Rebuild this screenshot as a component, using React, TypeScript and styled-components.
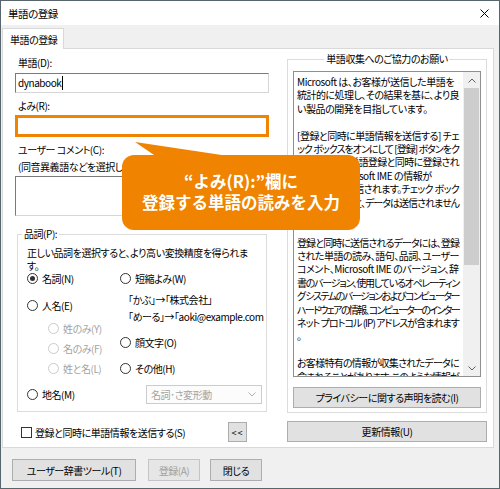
import React, { useLayoutEffect, useRef, useState } from 'react';
import styled, { createGlobalStyle } from 'styled-components';

const GlobalStyle = createGlobalStyle`
  html, body {
    margin: 0;
    padding: 0;
    background: #ffffff;
  }
  body {
    font-family: "Noto Sans CJK JP", "Noto Sans", sans-serif;
    font-size: 10px;
    color: #000000;
  }
  * {
    box-sizing: border-box;
  }
`;

const Window = styled.div`
  position: relative;
  width: 500px;
  height: 489px;
  border: 1px solid #57656d;
  background: #f0f0f0;
  display: flex;
  flex-direction: column;
  overflow: hidden;
  font-feature-settings: "palt";
  letter-spacing: -0.45px;
`;

const TitleBar = styled.div`
  flex: none;
  height: 24px;
  background: #ffffff;
  display: flex;
  align-items: center;
  justify-content: space-between;
  padding: 0 10px 0 7px;
  font-size: 10.5px;
`;

const Body = styled.div`
  padding: 3px 5px 0 1px;
`;

const TabStrip = styled.div`
  display: flex;
`;

const Tab = styled.div`
  position: relative;
  z-index: 1;
  height: 21px;
  margin-bottom: -1px;
  padding: 0 6px 0 7px;
  display: flex;
  align-items: center;
  background: #ffffff;
  border: 1px solid #d9d9d9;
  border-bottom: none;
`;

const TabPanel = styled.div`
  height: 400px;
  background: #ffffff;
  border: 1px solid #d9d9d9;
  display: grid;
  grid-template-columns: 254px 200px;
  column-gap: 18px;
  padding: 0 6px 0 12px;
`;

const Column = styled.div`
  display: flex;
  flex-direction: column;
`;

const FieldLabel = styled.div<{ $mt: number; $indent?: number }>`
  margin-top: ${p => p.$mt}px;
  padding-left: ${p => p.$indent ?? 3}px;
  height: 14px;
  line-height: 14px;
  white-space: nowrap;
  overflow: hidden;
`;

const TextInput = styled.div<{ $mt: number; $h: number; $highlight?: boolean }>`
  margin-top: ${p => p.$mt}px;
  height: ${p => p.$h}px;
  background: #ffffff;
  border-style: solid;
  border-width: ${p => (p.$highlight ? 3 : 1)}px;
  border-color: ${p => (p.$highlight ? '#f08300' : '#7a7a7a #d6d6d6 #d6d6d6 #7a7a7a')};
  padding: 1px 2px;
  display: flex;
  align-items: flex-start;
  line-height: 16px;
`;

const Caret = styled.span`
  display: inline-block;
  width: 1px;
  height: 14px;
  margin-top: 1px;
  margin-left: 1px;
  background: #000000;
`;

const GroupBox = styled.div<{ $mt: number; $mx: number }>`
  position: relative;
  margin: ${p => p.$mt}px ${p => p.$mx}px 0;
  border: 1px solid #dcdcdc;
`;

const Legend = styled.span<{ $center?: boolean }>`
  position: absolute;
  top: -8px;
  left: ${p => (p.$center ? '50%' : '4px')};
  transform: ${p => (p.$center ? 'translateX(-50%)' : 'none')};
  padding: 0 2px;
  background: #ffffff;
  line-height: 14px;
  white-space: nowrap;
`;

const PartsBody = styled.div`
  padding: 12px 8px 7px 9px;
`;

const Hint = styled.div`
  line-height: 12.5px;
  white-space: nowrap;
`;

const RadioGrid = styled.div`
  margin-top: -1px;
  display: grid;
  grid-template-columns: 93px 1fr;
`;

const RadioItem = styled.div<{ $mt?: number; $indent?: number; $disabled?: boolean }>`
  margin-top: ${p => p.$mt ?? 0}px;
  margin-left: ${p => p.$indent ?? 0}px;
  height: 14px;
  display: flex;
  align-items: center;
  gap: 4px;
  white-space: nowrap;
  color: ${p => (p.$disabled ? '#a3a3a3' : '#000000')};
`;

const RadioCircle = styled.span<{ $checked?: boolean; $disabled?: boolean }>`
  flex: none;
  width: 11px;
  height: 11px;
  border-radius: 50%;
  border: 1px solid ${p => (p.$disabled ? '#cbcbcb' : '#333333')};
  background: #ffffff;
  display: flex;
  align-items: center;
  justify-content: center;

  &::after {
    content: '';
    width: 5px;
    height: 5px;
    border-radius: 50%;
    background: ${p => (p.$checked ? '#333333' : 'transparent')};
  }
`;

const Example = styled.div<{ $mt: number }>`
  margin-top: ${p => p.$mt}px;
  margin-left: 8px;
  height: 14px;
  line-height: 14px;
  white-space: nowrap;
`;

const BottomRow = styled.div`
  margin-top: 10px;
  height: 19px;
  display: grid;
  grid-template-columns: 93px 1fr;
  align-items: center;
`;

const Select = styled.div`
  margin-left: 26px;
  width: 116px;
  height: 19px;
  border: 1px solid #cccccc;
  background: #fcfcfc;
  color: #a3a3a3;
  display: flex;
  align-items: center;
  justify-content: space-between;
  padding: 0 5px 0 4px;
`;

const CheckRow = styled.div`
  margin-top: 10px;
  height: 20px;
  display: flex;
  align-items: center;
  padding-left: 6px;
`;

const CheckBox = styled.span`
  flex: none;
  width: 11px;
  height: 11px;
  border: 1px solid #333333;
  background: #ffffff;
  margin-right: 3px;
`;

const Button = styled.div<{ $w?: number; $h: number; $mt?: number; $disabled?: boolean }>`
  flex: none;
  width: ${p => (p.$w ? `${p.$w}px` : 'auto')};
  height: ${p => p.$h}px;
  margin-top: ${p => p.$mt ?? 0}px;
  background: ${p => (p.$disabled ? '#e6e6e6' : '#e1e1e1')};
  border: 1px solid ${p => (p.$disabled ? '#c4c4c4' : '#adadad')};
  color: ${p => (p.$disabled ? '#a0a0a0' : '#000000')};
  display: flex;
  align-items: center;
  justify-content: center;
  white-space: nowrap;
`;

const SmallButton = styled(Button)`
  margin-left: auto;
  margin-right: 22px;
  font-size: 9px;
  letter-spacing: 1px;
`;

const NoticeBody = styled.div`
  padding: 11px 5px 4px 5px;
`;

const NoticeBox = styled.div`
  height: 306px;
  border: 1px solid #8e8f8f;
  background: #ffffff;
  display: flex;
`;

const NoticeText = styled.div`
  flex: 1;
  min-width: 0;
  overflow: hidden;
  padding: 3px 0 0 3px;
`;

const NoticeLine = styled.div`
  height: 13.4px;
  line-height: 13.4px;
  white-space: nowrap;
`;

const ScrollBar = styled.div`
  flex: none;
  width: 17px;
  background: #f0f0f0;
  display: flex;
  flex-direction: column;
`;

const ScrollArrow = styled.div`
  height: 16px;
  display: flex;
  align-items: center;
  justify-content: center;
`;

const ScrollThumb = styled.div`
  height: 177px;
  margin: 0 1px;
  background: #cdcdcd;
`;

const ScrollTrack = styled.div`
  flex: 1;
`;

const Footer = styled.div`
  display: flex;
  gap: 12px;
  padding: 11px 0 0 11px;

  & > :last-child {
    margin-left: -2px;
  }
`;

const Callout = styled.div`
  position: absolute;
  left: 121px;
  top: 154px;
  width: 238px;
  height: 75px;
  border-radius: 12px;
  background: #f08300;
  color: #ffffff;
  font-size: 16.5px;
  font-weight: 700;
  line-height: 21px;
  letter-spacing: 0;
  font-feature-settings: normal;
  display: flex;
  flex-direction: column;
  align-items: center;
  justify-content: center;
  padding-bottom: 2px;

  &::before {
    content: '';
    position: absolute;
    left: 13px;
    top: -13px;
    width: 100px;
    height: 15px;
    background: #f08300;
    clip-path: polygon(0 0, 22px 100%, 100px 100%);
  }
`;

const Chevron: React.FC<{ up?: boolean; color?: string }> = ({ up, color = '#606060' }) => (
  <svg width="8" height="5" viewBox="0 0 8 5">
    <polyline
      points={up ? '0.5,4.5 4,1 7.5,4.5' : '0.5,0.5 4,4 7.5,0.5'}
      fill="none"
      stroke={color}
      strokeWidth="1"
    />
  </svg>
);

const notice = [
  'Microsoft は、お客様が送信した単語を',
  '統計的に処理し、その結果を基に、より良',
  'い製品の開発を目指しています。',
  '',
  '[登録と同時に単語情報を送信する] チェ',
  'ック ボックスをオンにして [登録] ボタンをク',
  'リックすると、単語登録と同時に登録され',
  'た単語と Microsoft IME の情報が',
  'Microsoft に送信されます。チェック ボック',
  'スをオフにすると、データは送信されません',
  '。',
  '',
  '登録と同時に送信されるデータには、登録',
  'された単語の読み、語句、品詞、ユーザー',
  'コメント、Microsoft IME のバージョン、辞',
  '書のバージョン、使用しているオペレーティン',
  'グ システムのバージョンおよびコンピューター',
  'ハードウェアの情報、コンピューターのインター',
  'ネット プロトコル (IP) アドレスが含まれます',
  '。',
  '',
  'お客様特有の情報が収集されたデータに',
  '含まれることがあります。このような情報が',
  '含まれていた場合でも、Microsoft では',
];

// 行が枠に収まらないときだけ字間を詰める
const BASE_SPACING = -0.45;
const LINE_MAX = 162;

const FitLine: React.FC<{ text: string }> = ({ text }) => {
  const ref = useRef<HTMLSpanElement>(null);
  const [spacing, setSpacing] = useState<number | null>(null);

  useLayoutEffect(() => {
    const measure = () => {
      const el = ref.current;
      if (!el || !text) return;
      const current = parseFloat(getComputedStyle(el).letterSpacing) || 0;
      const width = el.getBoundingClientRect().width;
      const natural = width - (current - BASE_SPACING) * text.length;
      setSpacing(natural > LINE_MAX ? BASE_SPACING - (natural - LINE_MAX) / text.length : null);
    };
    measure();
    document.fonts?.ready.then(measure);
  }, [text]);

  return (
    <NoticeLine>
      <span ref={ref} style={spacing !== null ? { letterSpacing: `${spacing}px` } : undefined}>
        {text || '\u00a0'}
      </span>
    </NoticeLine>
  );
};

const App: React.FC = () => {
  return (
    <>
      <GlobalStyle />
      <Window>
        <TitleBar>
          <span>単語の登録</span>
          <svg width="9" height="9" viewBox="0 0 9 9">
            <path d="M0.5 0.5 L8.5 8.5 M8.5 0.5 L0.5 8.5" stroke="#000" strokeWidth="1" />
          </svg>
        </TitleBar>

        <Body>
          <TabStrip>
            <Tab>単語の登録</Tab>
          </TabStrip>
          <TabPanel>
            <Column>
              <FieldLabel $mt={7}>単語(D):</FieldLabel>
              <TextInput $mt={3} $h={20}>
                dynabook<Caret />
              </TextInput>
              <FieldLabel $mt={6}>よみ(R):</FieldLabel>
              <TextInput $mt={2} $h={22} $highlight />
              <FieldLabel $mt={6}>ユーザー コメント(C):</FieldLabel>
              <FieldLabel $mt={3} $indent={3}>
                (同音異義語などを選択しやすくするためのコメント)
              </FieldLabel>
              <TextInput $mt={2} $h={40} />

              <GroupBox $mt={18} $mx={2}>
                <Legend>品詞(P):</Legend>
                <PartsBody>
                  <Hint>
                    正しい品詞を選択すると、より高い変換精度を得られま
                    <br />
                    す。
                  </Hint>
                  <RadioGrid>
                    <Column>
                      <RadioItem>
                        <RadioCircle $checked />
                        名詞(N)
                      </RadioItem>
                      <RadioItem $mt={13}>
                        <RadioCircle />
                        人名(E)
                      </RadioItem>
                      <RadioItem $mt={9} $indent={21} $disabled>
                        <RadioCircle $disabled />
                        姓のみ(Y)
                      </RadioItem>
                      <RadioItem $mt={6} $indent={21} $disabled>
                        <RadioCircle $disabled />
                        名のみ(F)
                      </RadioItem>
                      <RadioItem $mt={6} $indent={21} $disabled>
                        <RadioCircle $disabled />
                        姓と名(L)
                      </RadioItem>
                    </Column>
                    <Column>
                      <RadioItem>
                        <RadioCircle />
                        短縮よみ(W)
                      </RadioItem>
                      <Example $mt={8}>「かぶ」→「株式会社」</Example>
                      <Example $mt={3}>「めーる」→「aoki@example.com</Example>
                      <RadioItem $mt={11}>
                        <RadioCircle />
                        顔文字(O)
                      </RadioItem>
                      <RadioItem $mt={12}>
                        <RadioCircle />
                        その他(H)
                      </RadioItem>
                    </Column>
                  </RadioGrid>
                  <BottomRow>
                    <RadioItem>
                      <RadioCircle />
                      地名(M)
                    </RadioItem>
                    <Select>
                      <span>名詞･さ変形動</span>
                      <Chevron color="#b0b0b0" />
                    </Select>
                  </BottomRow>
                </PartsBody>
              </GroupBox>

              <CheckRow>
                <CheckBox />
                登録と同時に単語情報を送信する(S)
                <SmallButton $w={19} $h={20}>
                  &lt;&lt;
                </SmallButton>
              </CheckRow>
            </Column>

            <Column>
              <GroupBox $mt={10} $mx={0}>
                <Legend $center>単語収集へのご協力のお願い</Legend>
                <NoticeBody>
                  <NoticeBox>
                    <NoticeText>
                      {notice.map((line, index) => (
                        <FitLine key={index} text={line} />
                      ))}
                    </NoticeText>
                    <ScrollBar>
                      <ScrollArrow>
                        <Chevron up />
                      </ScrollArrow>
                      <ScrollThumb />
                      <ScrollTrack />
                      <ScrollArrow>
                        <Chevron />
                      </ScrollArrow>
                    </ScrollBar>
                  </NoticeBox>
                  <Button $h={21} $mt={10}>
                    プライバシーに関する声明を読む(I)
                  </Button>
                </NoticeBody>
              </GroupBox>
              <Button $h={21} $mt={8}>
                更新情報(U)
              </Button>
            </Column>
          </TabPanel>
        </Body>

        <Footer>
          <Button $w={124} $h={22}>
            ユーザー辞書ツール(T)
          </Button>
          <Button $w={52} $h={22} $disabled>
            登録(A)
          </Button>
          <Button $w={52} $h={22}>
            閉じる
          </Button>
        </Footer>

        <Callout>
          <span>“よみ(R):”欄に</span>
          <span>登録する単語の読みを入力</span>
        </Callout>
      </Window>
    </>
  );
};

export default App;
